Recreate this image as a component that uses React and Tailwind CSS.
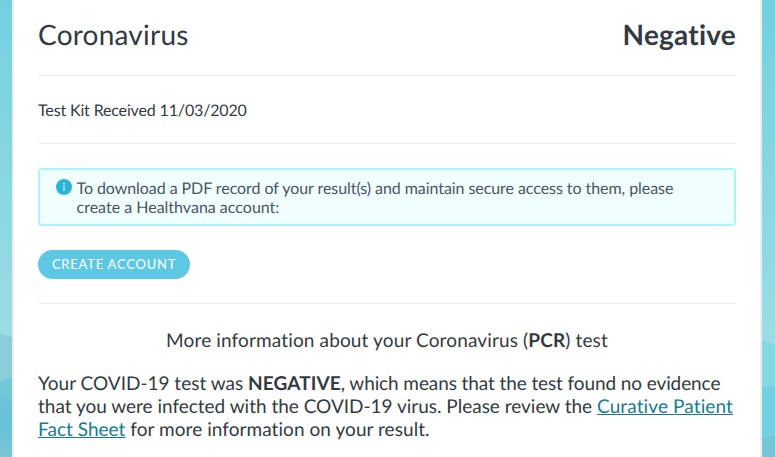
import React from 'react';

const Divider = () => <hr className="h-px border-0 bg-[#ececed]" />;

const InfoIcon = () => (
  <svg className="h-4 w-4 shrink-0" viewBox="0 0 16 16" aria-hidden="true">
    <circle cx="8" cy="8" r="8" fill="#2eb3d8" />
    <circle cx="8" cy="4.7" r="0.9" fill="#c5ebf5" />
    <path d="M8 6.5V12" stroke="#a9e0ef" strokeWidth="1.6" />
  </svg>
);

// layered hills behind the card
const Scenery = () => (
  <svg className="absolute inset-0 h-full w-full" viewBox="0 0 775 457" aria-hidden="true">
    <defs>
      <linearGradient id="sky" x1="0" y1="0" x2="0" y2="1">
        <stop offset="0" stopColor="#73d0de" />
        <stop offset="0.75" stopColor="#9bdde3" />
      </linearGradient>
      <linearGradient id="hill" gradientUnits="userSpaceOnUse" x1="0" y1="395" x2="0" y2="457">
        <stop offset="0" stopColor="#6ec4d7" />
        <stop offset="0.5" stopColor="#69c1d7" />
        <stop offset="1" stopColor="#7ac6d6" />
      </linearGradient>
    </defs>
    <rect width="775" height="457" fill="url(#sky)" />
    <path d="M0 334L12 337V457H0Z" fill="#89cdd7" />
    <path d="M0 382L12 377V457H0Z" fill="#73c8d8" />
    <path d="M0 395L12 396V457H0Z" fill="url(#hill)" />
    <path d="M762 340L775 345V457H762Z" fill="#85d7e2" />
    <path d="M762 387L775 386V457H762Z" fill="#72d0e2" />
    <path d="M762 439L775 435V457H762Z" fill="#76c6d7" />
  </svg>
);

export default function App() {
  return (
    <div className="relative h-[457px] w-[775px] overflow-hidden pl-3 pr-[13px] font-['Lato',sans-serif] text-[#343a43] antialiased [font-variant-ligatures:none] [text-rendering:geometricPrecision]">
      <Scenery />
      <main className="relative h-full border-x-2 border-[#ebeef0] bg-white px-6">
        <div className="flex h-[75px] items-center justify-between pb-[7px] text-[28px] tracking-[0.22px]">
          <h1>Coronavirus</h1>
          <span className="font-bold">Negative</span>
        </div>
        <Divider />
        <p className="flex h-[67px] items-center pt-[3px] text-[16px] tracking-[-0.15px]">Test Kit Received 11/03/2020</p>
        <Divider />

        <div className="mt-6 flex h-[58px] gap-[4.5px] rounded-[4px] border-2 border-[#abf5f9] bg-[#f0feff] pl-4 pt-[9px] text-[16px] leading-[19px] text-[#4a5565]">
          <InfoIcon />
          <p className="whitespace-nowrap">
            <span className="tracking-[-0.065px]">
              To download a PDF record of your result(s) and maintain secure access to them, please
            </span>
            <br />
            create a Healthvana account:
          </p>
        </div>

        <button className="mb-6 mt-6 block h-[29px] w-[152px] rounded-full bg-[#5ec8e4] pt-px text-[13px] tracking-[0.77px] text-white">
          CREATE ACCOUNT
        </button>
        <Divider />

        <h2 className="mt-[25px] text-center text-[19px] leading-[23px] tracking-[0.14px]">
          More information about your Coronavirus (<b>PCR</b>) test
        </h2>
        <p className="mt-5 whitespace-nowrap text-[19px] leading-[23px]">
          Your COVID-19 test was <b className="tracking-[0.1px]">NEGATIVE</b>
          <span className="tracking-[-0.1px]">, which means that the test found no evidence</span>
          <br />
          <span className="tracking-[-0.01px]">
            that you were infected with the COVID-19 virus. Please review the{' '}
          </span>
          <a href="#" className="text-[#147c94] underline">
            <span className="tracking-[0.12px]">Curative Patient</span>
            <br />
            <span className="tracking-[0.03px]">Fact Sheet</span>
          </a>{' '}
          <span className="tracking-[0.06px]">for more information on your result.</span>
        </p>
      </main>
    </div>
  );
}
